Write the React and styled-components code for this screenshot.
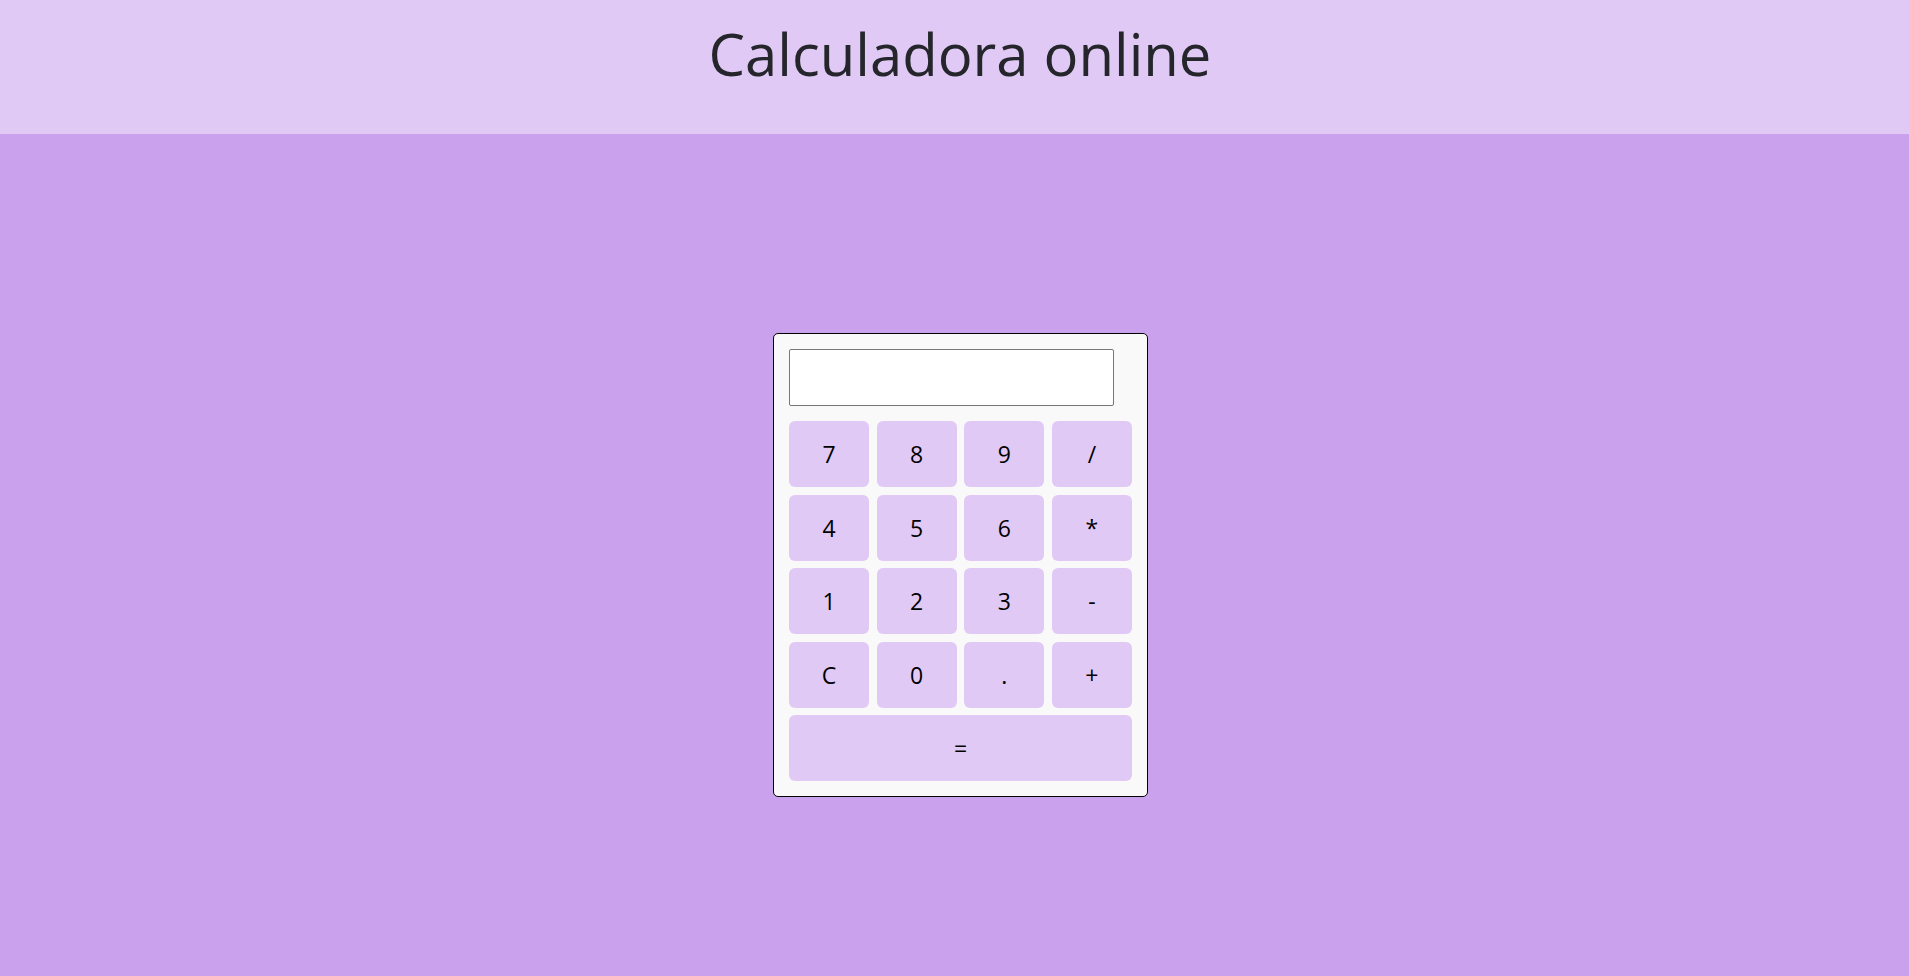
import React, { useState } from 'react';
import styled, { createGlobalStyle } from 'styled-components';

const GlobalStyle = createGlobalStyle`
    html, body {
        margin: 0;
        padding: 0;
    }
    body {
        background-color: #c9a1ed;
        font-family: "Open Sans", "DejaVu Sans", sans-serif;
        color: #212529;
    }
`;

const Header = styled.header`
    height: 134px;
    box-sizing: border-box;
    padding: 19px 0 0 11px;
    background-color: #e1c9f5;
    text-align: center;
    h1 {
        margin: 0;
        font-size: 58px;
        font-weight: 400;
        line-height: 1.2;
        color: #24262b;
    }
`;

const Main = styled.main`
    display: flex;
    justify-content: center;
    padding: 199px 0 0 12px;
`;

const Calc = styled.div`
    width: 375px;
    box-sizing: border-box;
    padding: 15px;
    background-color: #f9f9f9;
    border: 1px solid #000;
    border-radius: 5px;
`;

const Display = styled.input`
    display: block;
    width: 325px;
    height: 57px;
    box-sizing: border-box;
    margin: 0 0 15px;
    padding: 4px 8px;
    border: 1px solid #767676;
    border-radius: 2px;
    background: #fff;
    font-family: inherit;
    font-size: 24px;
    outline: none;
`;

const Keys = styled.div`
    display: grid;
    grid-template-columns: repeat(4, 1fr);
    gap: 7.5px;
`;

const Key = styled.button`
    grid-column: ${p => (p.$wide ? '1 / -1' : 'auto')};
    height: 66px;
    border: none;
    border-radius: 6px;
    background-color: #e1c9f5;
    color: #000;
    font-family: "Open Sans", "DejaVu Sans", sans-serif;
    font-size: 23px;
    cursor: pointer;
    &:hover {
        background-color: #d6b8f0;
    }
`;

const keys = ['7', '8', '9', '/', '4', '5', '6', '*', '1', '2', '3', '-', 'C', '0', '.', '+'];

const App = () => {
    const [value, setValue] = useState('');

    const press = (k) => {
        if (k === 'C') return setValue('');
        if (k === '=') {
            try {
                // eslint-disable-next-line no-new-func
                setValue(String(Function('return (' + value + ')')()));
            } catch (e) {
                setValue('Error');
            }
            return;
        }
        setValue(v => v + k);
    };

    return (
        <>
            <GlobalStyle />
            <Header>
                <h1>Calculadora online</h1>
            </Header>
            <Main>
                <Calc>
                    <Display type="text" value={value} readOnly />
                    <Keys>
                        {keys.map(k => (
                            <Key key={k} onClick={() => press(k)}>{k}</Key>
                        ))}
                        <Key $wide onClick={() => press('=')}>=</Key>
                    </Keys>
                </Calc>
            </Main>
        </>
    );
};

export default App;
